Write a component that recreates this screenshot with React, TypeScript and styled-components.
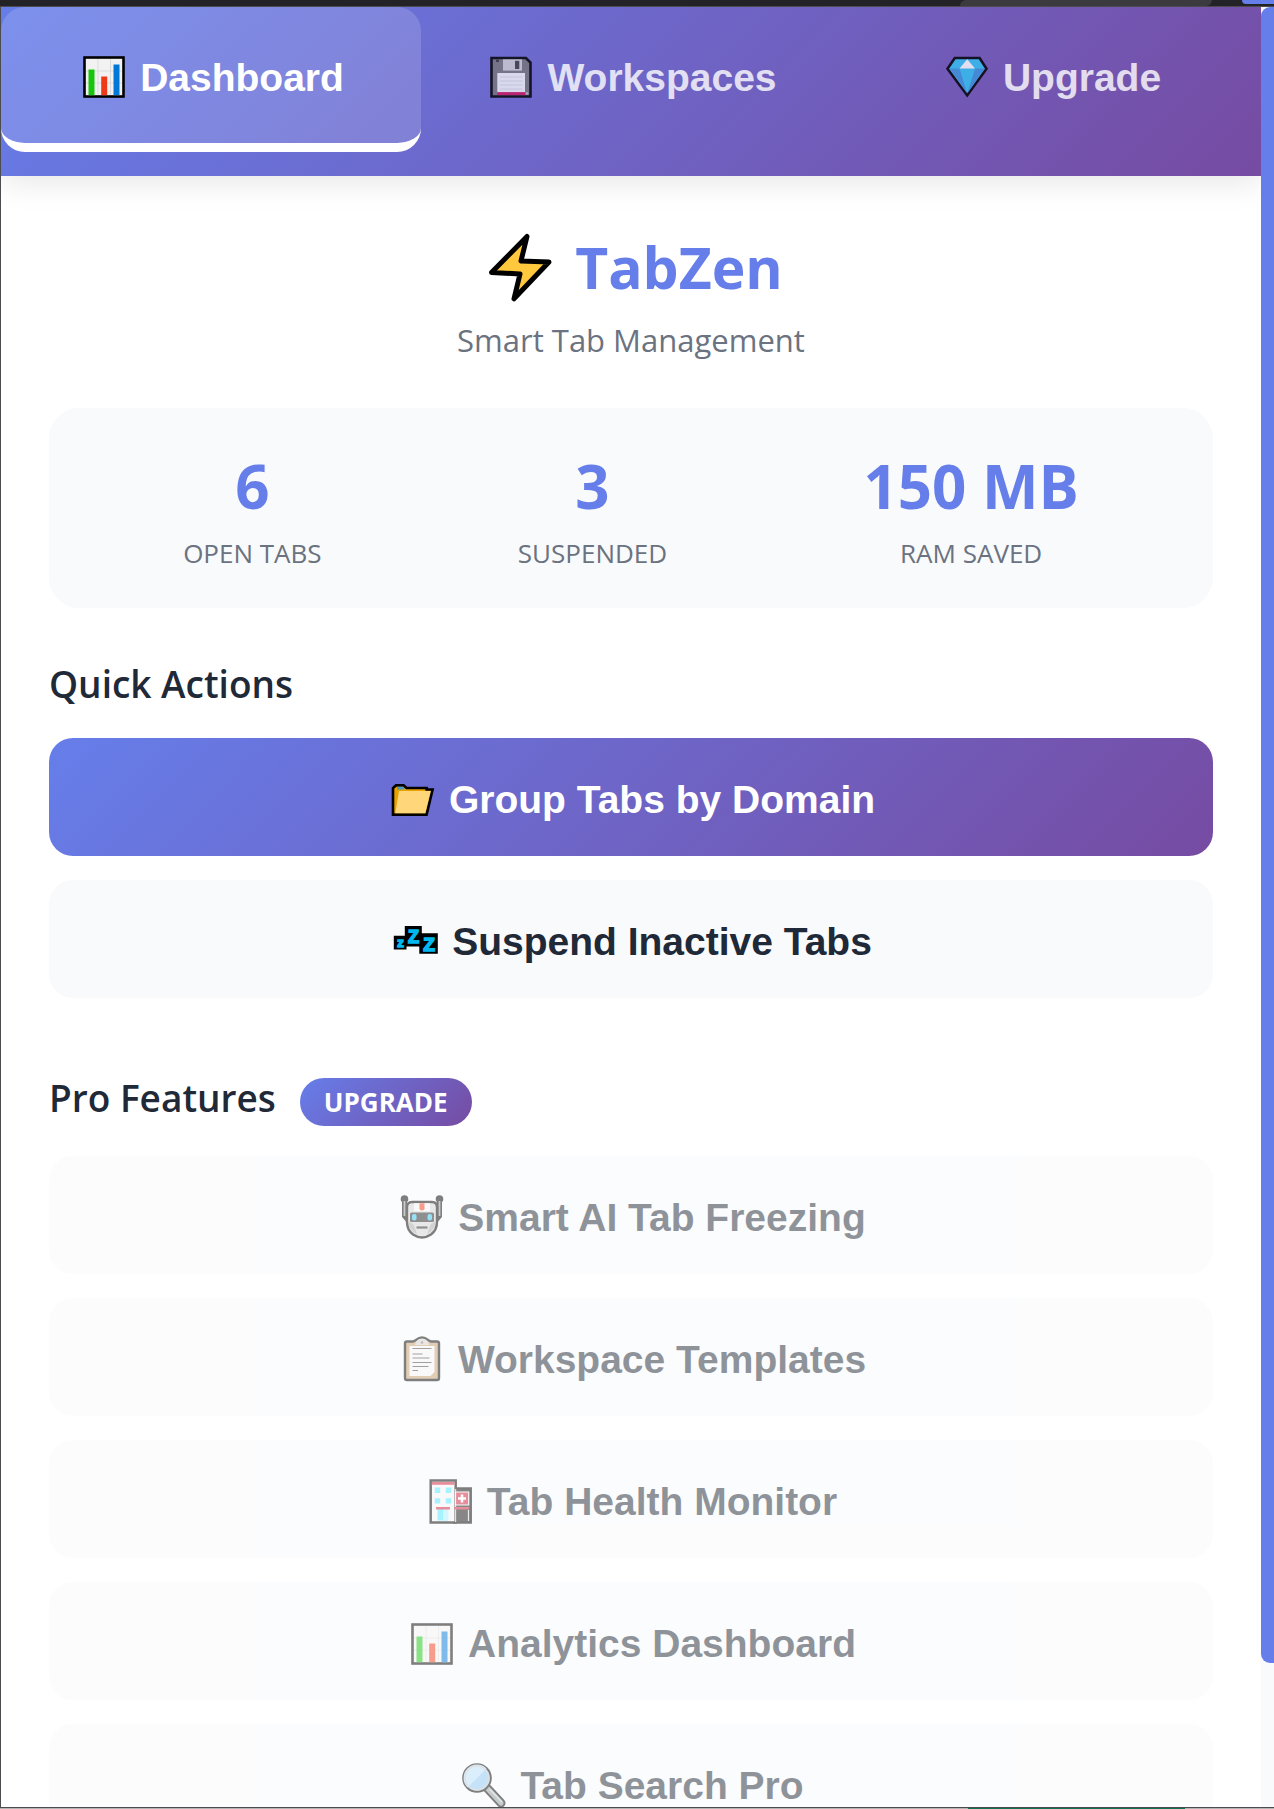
import React from 'react';
import styled, { createGlobalStyle, css } from 'styled-components';

const uiFont = `'Segoe UI', 'Open Sans', 'Noto Sans', sans-serif`;
const buttonFont = `Arial, 'Liberation Sans', sans-serif`;
const brandGradient = 'linear-gradient(135deg, #667eea 0%, #764ba2 100%)';
const surface = '#f9fafc';

const GlobalStyle = createGlobalStyle`
  *, *::before, *::after { box-sizing: border-box; }
  body { margin: 0; background: #fff; font-family: ${uiFont}; color: #1f2937; }
`;

const Shell = styled.div`
  display: flex;
  flex-direction: column;
  height: 100vh;
  overflow: hidden;
`;

const BrowserEdge = styled.div`
  display: flex;
  flex: none;
  justify-content: flex-end;
  height: 6px;
  background: #232327;
`;

const EdgeTab = styled.div`
  width: 252px;
  border-radius: 6px 0 6px 0;
  background: #3b3a3f;
`;

const EdgeCorner = styled.div`
  display: flex;
  justify-content: flex-end;
  width: 62px;
  background: #232327;
`;

const EdgeAvatar = styled.div`
  width: 32px;
  height: 4px;
  border-radius: 0 0 0 8px;
  background: #667eea;
`;

const DesktopEdge = styled.div`
  flex: none;
  height: 1px;
  background: linear-gradient(to right, #b4b4b4 76%, #0d7350 76%, #0d7350 93%, #b4b4b4 93%);
`;

const Popup = styled.div`
  display: flex;
  flex: 1;
  min-height: 0;
  border: 1px solid #4b4b50;
  border-right: 0;
`;

const Viewport = styled.div`
  flex: 1;
  min-width: 0;
  overflow-y: auto;
  scrollbar-width: none;
`;

const ScrollTrack = styled.div`
  flex: none;
  width: 13px;
  background: ${surface};
`;

const ScrollThumb = styled.div`
  height: 92%;
  border-radius: 9px 0 0 9px;
  background: #667eea;
`;

const TabBar = styled.nav`
  display: grid;
  grid-template-columns: repeat(3, 1fr);
  padding-bottom: 24px;
  background: ${brandGradient};
  box-shadow: 0 6px 30px rgba(0, 0, 0, 0.1);
`;

const labelRow = css`
  display: flex;
  align-items: center;
  justify-content: center;
  gap: 10px;
  border: 0;
  font-family: ${buttonFont};
  font-size: 39px;
  line-height: 45px;
  font-weight: 700;
  white-space: nowrap;
  cursor: pointer;
`;

const Tab = styled.button<{ $active?: boolean }>`
  ${labelRow}
  padding: 44px 0 40px;
  border-bottom: 9px solid ${p => (p.$active ? '#fff' : 'transparent')};
  border-radius: 24px;
  background: ${p => (p.$active ? 'rgba(255, 255, 255, 0.15)' : 'transparent')};
  color: #fff;
  opacity: ${p => (p.$active ? 1 : 0.8)};
`;

const Main = styled.main`
  padding: 48px;
`;

const Brand = styled.header`
  display: flex;
  flex-direction: column;
  align-items: center;
  margin-bottom: 46px;
`;

const BrandName = styled.h1`
  display: flex;
  align-items: center;
  gap: 16px;
  margin: 0;
  font-size: 57px;
  line-height: 86px;
  font-weight: 700;
  color: #667eea;
`;

const Tagline = styled.p`
  margin: 8px 0 0;
  font-size: 31px;
  line-height: 44px;
  color: #6b7280;
`;

const Stats = styled.dl`
  display: flex;
  justify-content: space-around;
  margin: 0 0 48px;
  padding: 36px;
  border-radius: 30px;
  background: ${surface};
`;

const Stat = styled.div`
  display: flex;
  flex-direction: column-reverse;
  gap: 6px;
  text-align: center;
`;

const StatLabel = styled.dt`
  font-size: 26px;
  line-height: 38px;
  color: #6b7280;
  text-transform: uppercase;
`;

const StatValue = styled.dd`
  margin: 0;
  font-size: 60px;
  line-height: 84px;
  font-weight: 700;
  color: #667eea;
`;

const Section = styled.section`
  margin-bottom: 72px;
`;

const SectionTitle = styled.h2`
  display: flex;
  align-items: baseline;
  gap: 24px;
  margin: 0 0 26px;
  font-size: 37px;
  line-height: 56px;
  font-weight: 600;
`;

const Badge = styled.span`
  margin-bottom: 4px;
  padding: 6px 24px;
  border-radius: 24px;
  background: ${brandGradient};
  color: #fff;
  font-size: 26px;
  line-height: 36px;
  font-weight: 700;
`;

const Actions = styled.div`
  display: flex;
  flex-direction: column;
  gap: 24px;
`;

const Action = styled.button<{ $primary?: boolean }>`
  ${labelRow}
  padding: 35px 24px 31px;
  border-radius: 24px;
  background: ${p => (p.$primary ? brandGradient : surface)};
  color: ${p => (p.$primary ? '#fff' : '#1f2937')};

  svg {
    margin: 1px 0 -1px;
  }

  &:disabled {
    opacity: 0.5;
    cursor: not-allowed;
  }
`;

const Emoji = styled.svg.attrs({ viewBox: '0 0 52 52', 'aria-hidden': true })`
  flex: none;
  width: 52px;
  height: 52px;
`;

const BoltSvg = styled.svg`
  flex: none;
  width: 80px;
  height: 72px;
`;

const ChartIcon = () => (
  <Emoji>
    <rect x="6.5" y="6.5" width="39" height="39" fill="#f2f2f2" stroke="#000" strokeWidth="2.6" />
    <path d="M20 8v36M32.5 8v36M8 20h36M8 32h36" stroke="#dcdcdc" strokeWidth="1" />
    <rect x="10.5" y="18.5" width="6" height="25.7" fill="#16c60c" />
    <rect x="23.2" y="25.5" width="6" height="18.7" fill="#f03a17" />
    <rect x="35.5" y="13.5" width="6" height="30.7" fill="#0078d7" />
  </Emoji>
);

const FloppyIcon = () => (
  <Emoji>
    <path d="M6.5 7h34.4l4.6 4.6V45.5h-39z" fill="#767676" stroke="#000" strokeWidth="2.6" />
    <rect x="11" y="8.5" width="3" height="2.5" fill="#333" />
    <rect x="18" y="8.4" width="19" height="11.2" fill="#cfcfcf" />
    <rect x="30" y="9.8" width="4.3" height="8.2" fill="#404040" />
    <rect x="12.3" y="22" width="27.7" height="19.4" fill="#f4f4f4" />
    <path d="M15 26h22.5M15 30h22.5M15 34h22.5M15 38h22.5" stroke="#d8dbe0" strokeWidth="1" />
    <rect x="12.3" y="41.2" width="27.7" height="2.9" fill="#d1125b" />
    <rect x="40.8" y="41.2" width="2.5" height="2.5" fill="#b5b5b5" />
  </Emoji>
);

const DiamondIcon = () => (
  <Emoji>
    <path d="M13.8 7h24.8l6.9 10.700L26.2 44.3 6.5 17.7z" fill="#31c4f3" stroke="#000" strokeWidth="2.6" />
    <path d="M8.2 17.5h10.3l7.7 25z" fill="#3a96dd" />
    <path d="M44 17.5H34l-7.800 25z" fill="#3a96dd" />
    <path d="M18.5 17.5L26.2 8.300 34 17.5z" fill="#fff" />
  </Emoji>
);

const FolderIcon = () => (
  <Emoji>
    <path d="M6 40.6V14l3-2.6h7.6l3 2.6h20v1.5h6l-6 25.1z" fill="#e9a100" stroke="#000" strokeWidth="2.6" />
    <path d="M10 12.8h6.500l1.200 2.700H10z" fill="#4d9bc0" />
    <path d="M12 17h31.700l-5.500 22.300H8.300z" fill="#ffd679" />
  </Emoji>
);

const SleepIcon = () => (
  <Emoji
    fill="#00b7f0"
    stroke="#00b7f0"
    strokeWidth="1.6"
    fontFamily={buttonFont}
    fontWeight="700"
    textAnchor="middle"
  >
    <path d="M3.800 19.800h11V10h17v7.300h16v20.500H29.300V30.500H16.500v3H3.800z" fill="#000" stroke="none" />
    <text x="10.500" y="31" fontSize="13">z</text>
    <text x="23.500" y="27" fontSize="18">Z</text>
    <text x="39" y="34.800" fontSize="19">Z</text>
  </Emoji>
);

const RobotIcon = () => (
  <Emoji>
    <path d="M8.5 8v16l3.5 4M43.5 8v16L40 28" fill="none" stroke="#000" strokeWidth="5" strokeLinecap="round" />
    <circle cx="8.5" cy="7" r="3.8" />
    <circle cx="43.5" cy="7" r="3.8" />
    <path d="M8.5 9v15M43.5 9v15" stroke="#999" strokeWidth="1.8" />
    <path d="M11 15q0-5 5-5h20q5 0 5 5v15q0 8-6 12.500-9 6-18 0-6-4.500-6-12.500z" fill="#d3d3d3" stroke="#000" strokeWidth="2.4" />
    <path d="M12.5 29l5 3.5 3.5 9.5q-8-3-8.500-13zM39.500 29l-5 3.500-3.500 9.500q8-3 8.500-13z" fill="#a8a8a8" />
    <path d="M18 11.200h16v8H18z" fill="#f5f5f5" />
    <path d="M23.500 11.200h5v6q-2.500 2.500-5 0z" fill="#f03a17" />
    <rect x="14" y="20.5" width="24" height="9.5" rx="1.5" fill="#222" />
    <rect x="16" y="22" width="4.5" height="6.5" rx="2" fill="#31c4f3" />
    <rect x="31.5" y="22" width="4.5" height="6.5" rx="2" fill="#31c4f3" />
    <path d="M20.5 35.5h11" stroke="#222" strokeWidth="2.2" />
  </Emoji>
);

const ClipboardIcon = () => (
  <Emoji>
    <path d="M20 6q6-5 12 0l3 1.5h6q2 0 2 2V44q0 2-2 2H11q-2 0-2-2V9.5q0-2 2-2h6z" fill="#c69c6d" stroke="#000" strokeWidth="2.4" />
    <path d="M13.5 12h25v26l-4 4h-21z" fill="#f4f4f4" />
    <path d="M19 11q1-6.5 7-6.5T33 11z" fill="#d0d0d0" />
    <circle cx="26" cy="8.5" r="1.3" fill="#a66" />
    <path d="M16.5 14.5h19M16.5 20h10M16.5 24h17M16.5 28.5h19M16.5 32.5h16M16.5 36.5h5.5" stroke="#444" strokeWidth="1.2" />
  </Emoji>
);

const HospitalIcon = () => (
  <Emoji>
    <path d="M29 12.5h16.700v34H29z" fill="#111" stroke="#000" strokeWidth="2.5" />
    <path d="M5.700 4.5h25v42h-25z" fill="#f4f4f4" stroke="#000" strokeWidth="2.5" />
    <path d="M30.700 13v33" stroke="#f4f4f4" strokeWidth="1" />
    <path d="M6.900 6h22.600v2.800H6.900z" fill="#d1203c" />
    <path d="M9.800 11.500h5.400v5.400H9.800zM20.800 11.500h5.400v5.400h-5.400zM9.800 22.200h5.400v5.400H9.800zM20.800 22.200h5.400v5.400h-5.400z" fill="#50e6ff" />
    <path d="M12.500 33h10.600v11.500H12.500z" fill="#50e6ff" />
    <path d="M18 33h5.200v11.500H18z" fill="#a7f2ff" />
    <path d="M11 31h14v2.500H11zM29.200 31h15v2.500h-15z" fill="#d1203c" />
    <path d="M30.500 16h13.200v13H30.500z" fill="#d1203c" stroke="#f4f4f4" strokeWidth="1.2" />
    <path d="M37 18.500v8M33 22.500h8" stroke="#fff" strokeWidth="2.5" />
    <path d="M43.500 34v11" stroke="#ddd" strokeWidth="1.2" />
  </Emoji>
);

const MagnifierIcon = () => (
  <Emoji>
    <path d="M29.5 28.5L43 43" stroke="#000" strokeWidth="9" strokeLinecap="round" />
    <path d="M30 29L43 43" stroke="#8d9a9a" strokeWidth="5.2" strokeLinecap="round" />
    <path d="M32 29.5L43.5 41.5" stroke="#c5cfcf" strokeWidth="1.6" strokeLinecap="round" />
    <circle cx="19" cy="18" r="13.7" fill="#8fc7f5" stroke="#000" strokeWidth="2.2" />
    <path d="M9.5 27.5A13 13 0 0 1 28.5 8.500z" fill="#b9defa" />
    <circle cx="19" cy="18" r="12" fill="none" stroke="#bcc4c8" strokeWidth="1.6" />
  </Emoji>
);

const BoltIcon = () => (
  <BoltSvg viewBox="0 0 80 72" aria-hidden="true">
    <path
      d="M48 5.500L42 30 70 31 35 67.800 41 43 12.500 41.500z"
      fill="#ffc83d"
      stroke="#000"
      strokeWidth="5"
      strokeLinejoin="round"
    />
  </BoltSvg>
);

const tabs = [
  { label: 'Dashboard', Icon: ChartIcon, active: true },
  { label: 'Workspaces', Icon: FloppyIcon, active: false },
  { label: 'Upgrade', Icon: DiamondIcon, active: false },
];

const stats = [
  { label: 'Open Tabs', value: '6' },
  { label: 'Suspended', value: '3' },
  { label: 'RAM Saved', value: '150 MB' },
];

const proFeatures = [
  { label: 'Smart AI Tab Freezing', Icon: RobotIcon },
  { label: 'Workspace Templates', Icon: ClipboardIcon },
  { label: 'Tab Health Monitor', Icon: HospitalIcon },
  { label: 'Analytics Dashboard', Icon: ChartIcon },
  { label: 'Tab Search Pro', Icon: MagnifierIcon },
];

export default function App() {
  return (
    <Shell>
      <GlobalStyle />
      <BrowserEdge>
        <EdgeTab />
        <EdgeCorner>
          <EdgeAvatar />
        </EdgeCorner>
      </BrowserEdge>
      <Popup>
        <Viewport>
          <TabBar>
            {tabs.map(({ label, Icon, active }) => (
              <Tab key={label} type="button" $active={active} aria-current={active ? 'page' : undefined}>
                <Icon />
                <span>{label}</span>
              </Tab>
            ))}
          </TabBar>
          <Main>
            <Brand>
              <BrandName>
                <BoltIcon />
                <span>TabZen</span>
              </BrandName>
              <Tagline>Smart Tab Management</Tagline>
            </Brand>
            <Stats>
              {stats.map(({ label, value }) => (
                <Stat key={label}>
                  <StatLabel>{label}</StatLabel>
                  <StatValue>{value}</StatValue>
                </Stat>
              ))}
            </Stats>
            <Section>
              <SectionTitle>Quick Actions</SectionTitle>
              <Actions>
                <Action type="button" $primary>
                  <FolderIcon />
                  <span>Group Tabs by Domain</span>
                </Action>
                <Action type="button">
                  <SleepIcon />
                  <span>Suspend Inactive Tabs</span>
                </Action>
              </Actions>
            </Section>
            <Section>
              <SectionTitle>
                Pro Features
                <Badge>UPGRADE</Badge>
              </SectionTitle>
              <Actions>
                {proFeatures.map(({ label, Icon }) => (
                  <Action key={label} type="button" disabled>
                    <Icon />
                    <span>{label}</span>
                  </Action>
                ))}
              </Actions>
            </Section>
          </Main>
        </Viewport>
        <ScrollTrack>
          <ScrollThumb />
        </ScrollTrack>
      </Popup>
      <DesktopEdge />
    </Shell>
  );
}
